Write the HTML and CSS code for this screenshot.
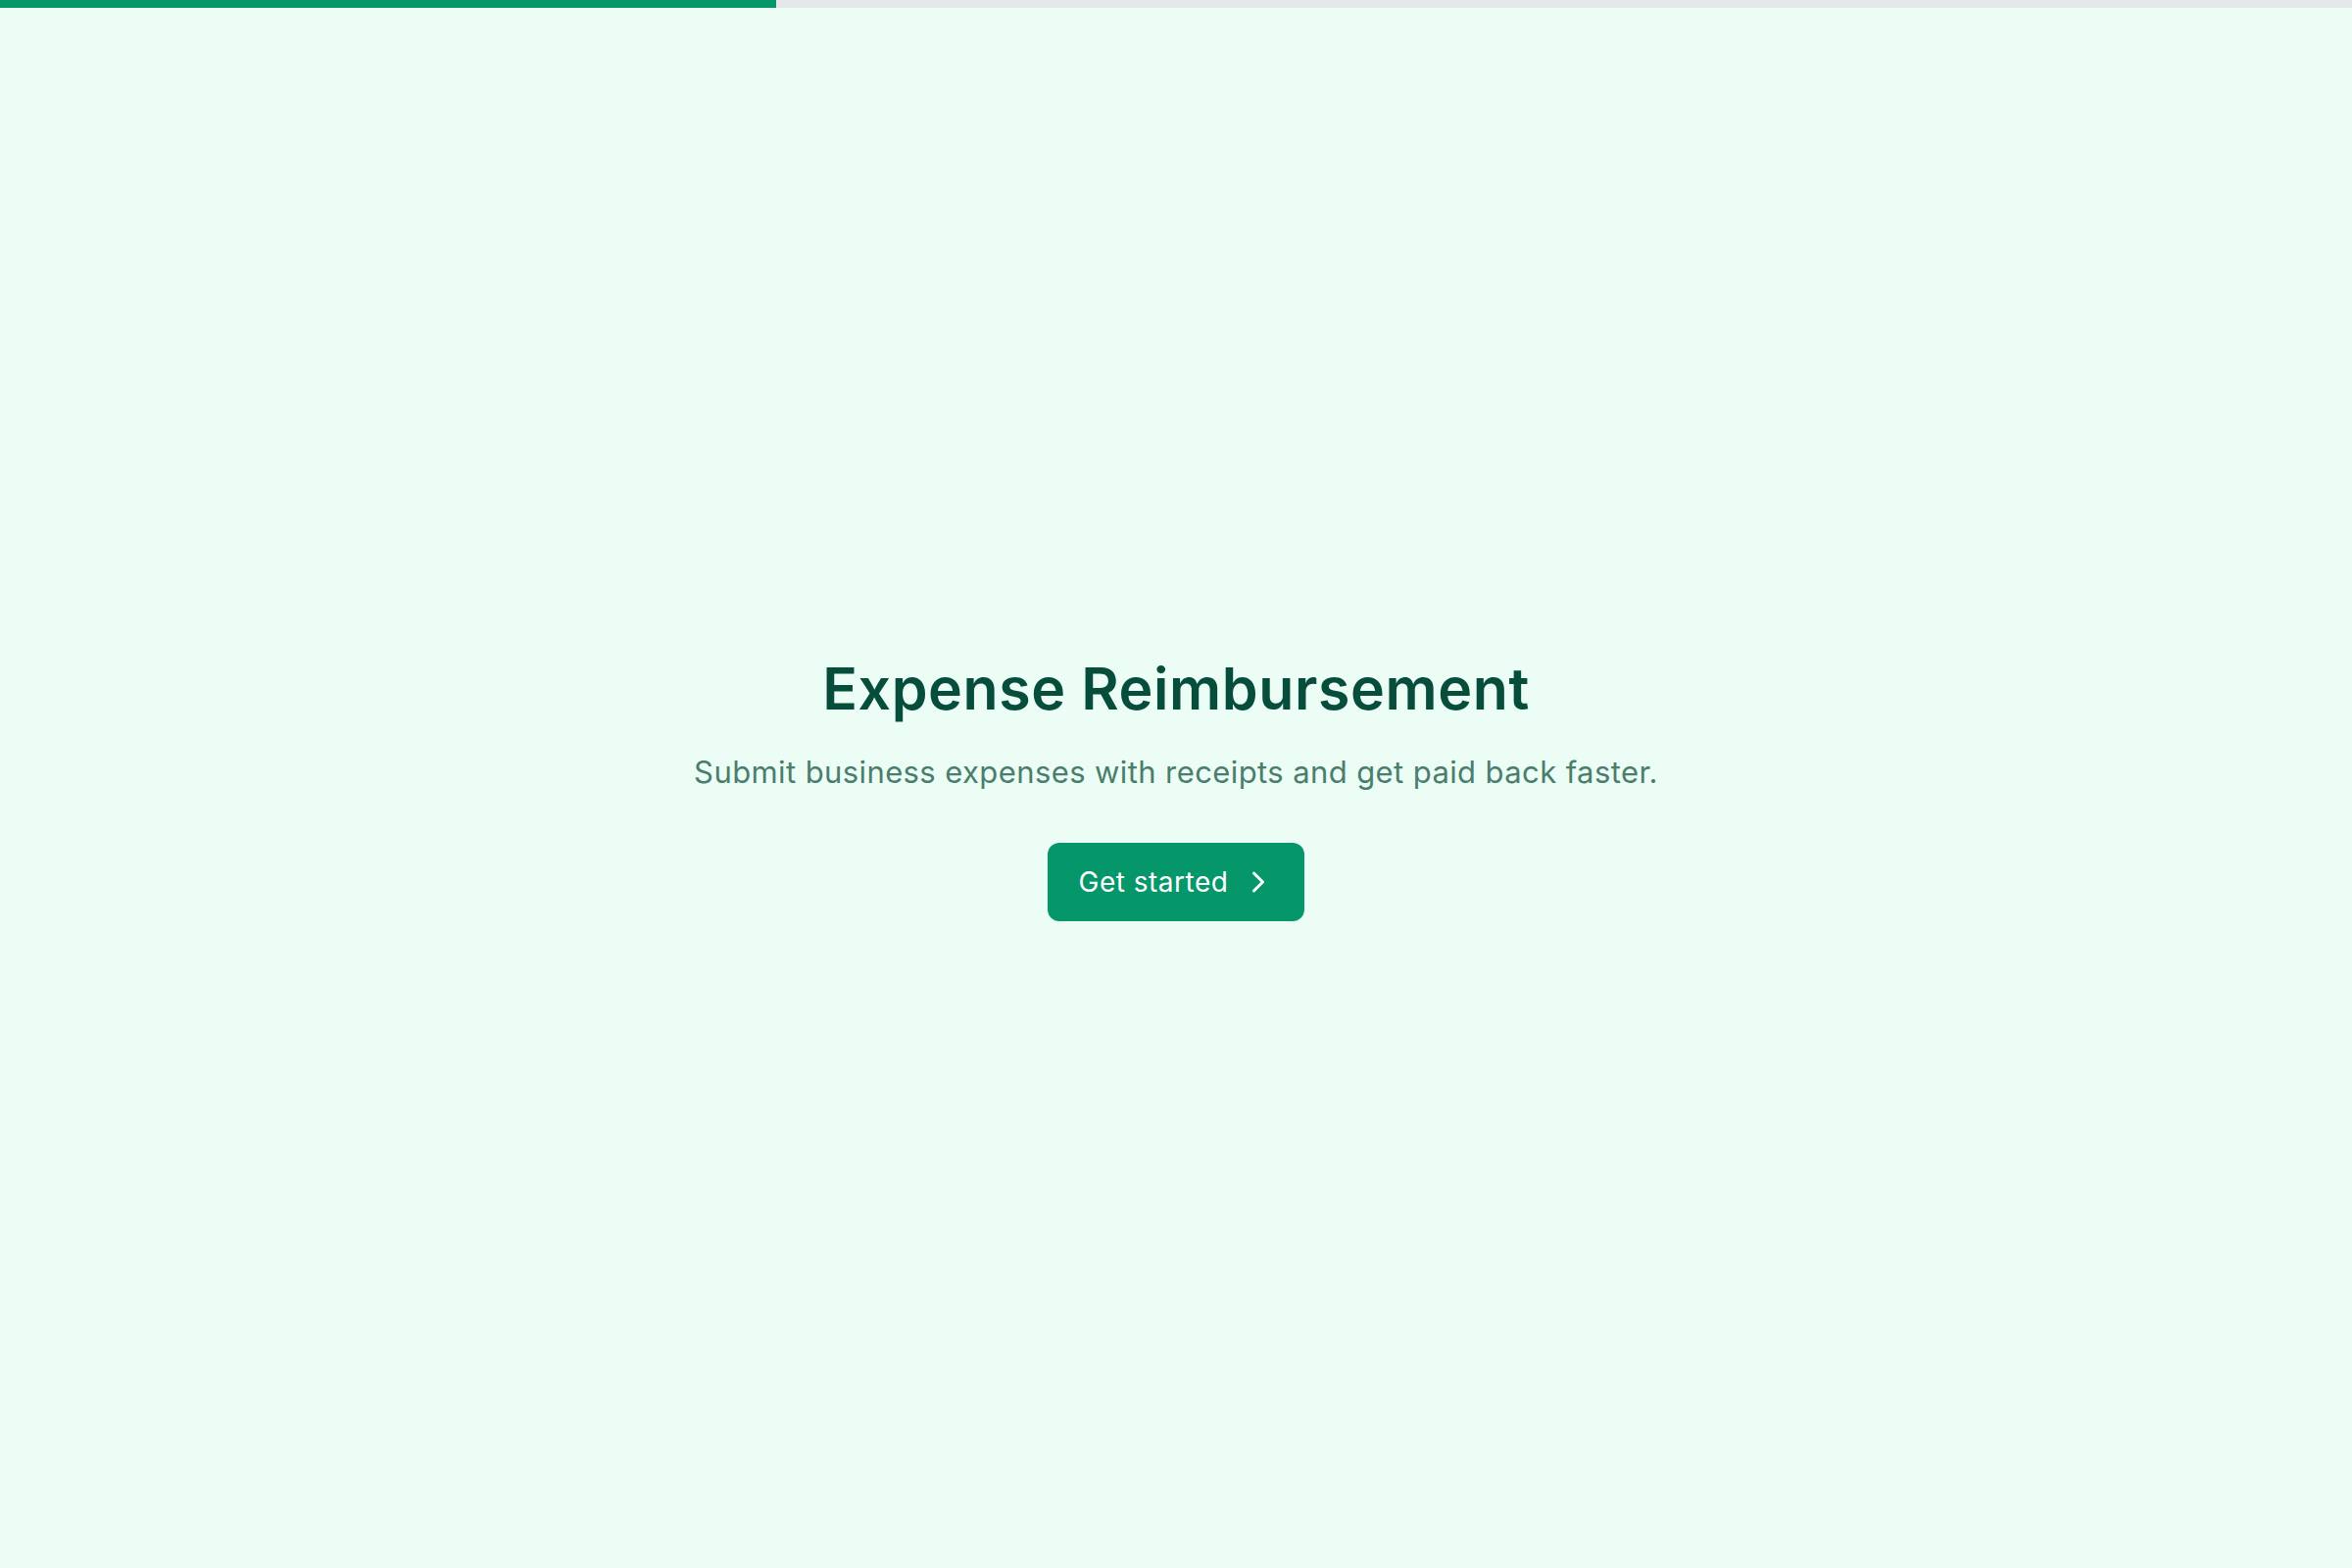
FILE: index.html
```html
<!DOCTYPE html>
<html lang="en">
<head>
<meta charset="utf-8">
<title>Expense Reimbursement</title>
<link rel="stylesheet" href="styles.css">
</head>
<body>
<div class="progress"><div class="progress-fill"></div></div>
<main class="hero">
  <h1 class="title">Expense Reimbursement</h1>
  <p class="subtitle">Submit business expenses with receipts and get paid back faster.</p>
  <button class="cta" type="button">
    <span>Get started</span>
    <svg class="chev" width="36" height="36" viewBox="0 0 24 24" fill="none" stroke="currentColor" stroke-width="2" stroke-linecap="round" stroke-linejoin="round"><path d="m9 18 6-6-6-6"/></svg>
  </button>
</main>
</body>
</html>
```

FILE: styles.css
```css
html, body {
  margin: 0;
  padding: 0;
}
body {
  background: #ecfdf5;
  font-family: Inter, "Noto Sans", sans-serif;
  min-height: 100vh;
  display: flex;
  flex-direction: column;
}
.progress {
  height: 8px;
  background: #e5e7eb;
  flex: none;
}
.progress-fill {
  height: 100%;
  width: 33%;
  background: #059669;
}
.hero {
  flex: 1;
  display: flex;
  flex-direction: column;
  align-items: center;
  justify-content: center;
  text-align: center;
  padding-top: 3px;
}
.title {
  margin: 0;
  font-size: 59px;
  line-height: 1.1;
  font-weight: 600;
  color: #064e3b;
  letter-spacing: 0.6px;
}
.subtitle {
  margin: 30px 0 0;
  font-size: 31px;
  line-height: 1.4;
  font-weight: 400;
  color: #4a7d6d;
  letter-spacing: 0.4px;
}
.cta {
  margin-top: 50px;
  display: flex;
  align-items: center;
  gap: 13px;
  height: 80px;
  padding: 0 29px 0 32px;
  border: none;
  border-radius: 12px;
  background: #059669;
  color: #ffffff;
  font-family: inherit;
  font-size: 28px;
  font-weight: 400;
  letter-spacing: 0.5px;
  cursor: pointer;
}
.chev {
  display: block;
}
```
